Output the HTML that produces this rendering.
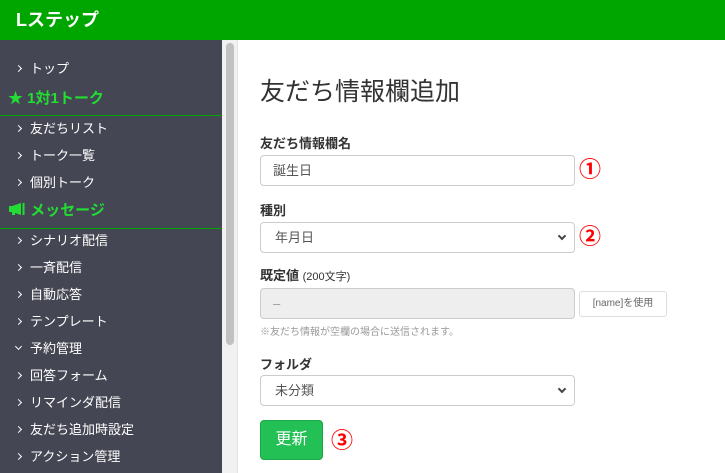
<!DOCTYPE html>
<html><head><meta charset="utf-8"><style>
*{margin:0;padding:0;box-sizing:border-box}
body{width:725px;height:473px;overflow:hidden;background:#fff;font-family:"Liberation Sans","Noto Sans CJK JP",sans-serif;position:relative}
.hdr{position:absolute;left:0;top:0;width:725px;height:40px;background:#00a600}
.logo{position:absolute;left:16px;top:6px;color:#fff;font-size:18px;font-weight:bold}
.side{position:absolute;left:0;top:40px;width:222px;height:433px;background:#454653}
.track{position:absolute;left:222px;top:40px;width:16px;height:433px;background:#f1f1f1;border-right:1px solid #e4e4e4}
.thumb{position:absolute;left:226px;top:43px;width:8px;height:302px;background:#c1c1c1;border-radius:4px}
.it{position:absolute;left:16px;color:#fff;font-size:13px;line-height:16px}
.it i{display:inline-block;width:5px;height:5px;border-right:1.5px solid #fff;border-top:1.5px solid #fff;transform:rotate(45deg);margin:0 9px 2px 0}
.it i.d{transform:rotate(135deg);margin-bottom:4px}
.hd{position:absolute;left:8px;color:#22dd33;font-size:15px;font-weight:bold;line-height:18px}
.ln{position:absolute;left:0;width:222px;height:1px;background:#00a600}
h1{position:absolute;left:260px;top:72px;font-size:25px;font-weight:normal;color:#333}
.lb{position:absolute;left:260px;font-size:13px;font-weight:bold;color:#333}
.in{position:absolute;left:260px;width:315px;height:31px;border:1px solid #ccc;border-radius:4px;font-size:13px;color:#555;padding:0 12px;line-height:29px;background:#fff}
.arr{position:absolute;right:9px;top:10px;width:6px;height:6px;border-right:2px solid #444;border-bottom:2px solid #444;transform:rotate(45deg)}
.num{position:absolute;color:#f00;font-size:22px;line-height:22px;font-weight:bold}
</style></head><body>
<div class="hdr"><div class="logo">Lステップ</div></div>
<div class="side">
<div class="it" style="top:21px"><i></i>トップ</div>
<div class="hd" style="top:50px">★ 1対1トーク</div>
<div class="ln" style="top:75px"></div>
<div class="it" style="top:81px"><i></i>友だちリスト</div>
<div class="it" style="top:108px"><i></i>トーク一覧</div>
<div class="it" style="top:135px"><i></i>個別トーク</div>
<div class="hd" style="top:162px"><svg width="18" height="14" viewBox="0 0 18 14" style="vertical-align:-1px"><rect x="1" y="4" width="3" height="6" fill="#22dd33"/><path d="M4 4 L13 1 L13 13 L4 10 Z" fill="#22dd33"/><rect x="14.5" y="1" width="2" height="12" fill="#22dd33"/><rect x="4" y="9" width="3" height="4" fill="#22dd33"/></svg> メッセージ</div>
<div class="ln" style="top:188px"></div>
<div class="it" style="top:193px"><i></i>シナリオ配信</div>
<div class="it" style="top:220px"><i></i>一斉配信</div>
<div class="it" style="top:247px"><i></i>自動応答</div>
<div class="it" style="top:274px"><i></i>テンプレート</div>
<div class="it" style="top:301px"><i class="d"></i>予約管理</div>
<div class="it" style="top:328px"><i></i>回答フォーム</div>
<div class="it" style="top:355px"><i></i>リマインダ配信</div>
<div class="it" style="top:382px"><i></i>友だち追加時設定</div>
<div class="it" style="top:409px"><i></i>アクション管理</div>
</div>
<div class="track"></div><div class="thumb"></div>
<h1>友だち情報欄追加</h1>
<div class="lb" style="top:133px">友だち情報欄名</div>
<div class="in" style="top:155px">誕生日</div>
<div class="num" style="left:579px;top:159px">①</div>
<div class="lb" style="top:200px">種別</div>
<div class="in" style="top:222px;padding-left:14px">年月日<span class="arr"></span></div>
<div class="num" style="left:579px;top:226px">②</div>
<div class="lb" style="top:265px">既定値 <span style="font-weight:normal;font-size:11px">(200文字)</span></div>
<div class="in" style="top:288px;background:#eee;color:#999">–</div>
<div style="position:absolute;left:579px;top:291px;width:88px;height:26px;border:1px solid #ddd;border-radius:3px;font-size:10px;color:#666;text-align:center;line-height:24px">[name]を使用</div>
<div style="position:absolute;left:260px;top:323px;font-size:10px;color:#999">※友だち情報が空欄の場合に送信されます。</div>
<div class="lb" style="top:354px">フォルダ</div>
<div class="in" style="top:375px;padding-left:14px">未分類<span class="arr"></span></div>
<div style="position:absolute;left:260px;top:420px;width:63px;height:40px;background:#22c055;border:1px solid #1aa84a;border-radius:4px;color:#fff;font-size:16px;text-align:center;line-height:38px">更新</div>
<div class="num" style="left:331px;top:430px">③</div>
</body></html>
